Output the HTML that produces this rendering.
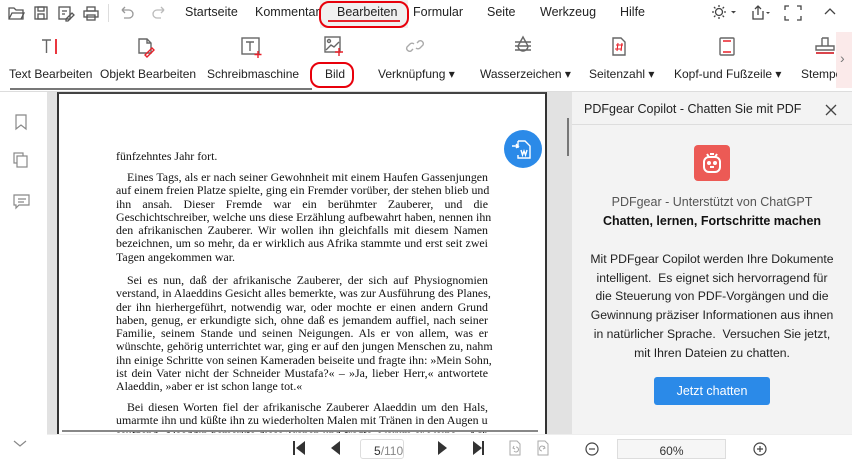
<!DOCTYPE html>
<html><head><meta charset="utf-8"><style>
*{margin:0;padding:0;box-sizing:border-box}
body{width:852px;height:456px;overflow:hidden;background:#fff;font-family:"Liberation Sans",sans-serif;font-size:12px;color:#222;position:relative}
.a{position:absolute}
.m{position:absolute;top:5px;font-size:12.5px;color:#222}
.tl{position:absolute;top:67px;font-size:12px;color:#222;white-space:nowrap}
.pg{font-family:"Liberation Serif",serif;font-size:11.9px;color:#111;position:absolute;left:116px;width:372px;line-height:13.3px}
.pg div{text-align:justify;text-align-last:justify;white-space:nowrap}
.pg div.l{text-align-last:left}
.pg div.i{text-indent:11px}
.cp{position:absolute;left:572px;width:280px;text-align:center;font-size:12px}
</style></head><body>
<svg class="a" style="left:6px;top:4px" width="160" height="18" viewBox="0 0 160 18" fill="none" stroke="#555" stroke-width="1.3">
<path d="M3 4h5l2 2h7v9H3z"/><path d="M3 15l3-6h12l-3 6"/>
<rect x="29" y="3" width="12" height="12"/><rect x="32" y="3" width="6" height="4"/><rect x="32" y="10" width="6" height="5"/>
<rect x="53" y="3" width="11" height="12"/><path d="M56 7h5M56 10h3M60 15l6-6 2 2-6 6h-2z"/>
<rect x="78" y="7" width="14" height="6"/><rect x="81" y="3" width="8" height="4"/><rect x="81" y="11" width="8" height="5"/>
<path d="M116 6h7a4 4 0 010 8h-5M116 6l3-3M116 6l3 3" stroke="#999"/>
<path d="M158 6h-7a4 4 0 000 8h4M158 6l-3-3M158 6l-3 3" stroke="#bbb"/>
</svg>
<div class="a" style="left:108px;top:4px;width:1px;height:18px;background:#ddd"></div>
<div class="m" style="left:185px">Startseite</div>
<div class="m" style="left:255px">Kommentar</div>
<div class="a" style="left:320px;top:0;width:88px;height:28px;background:#f0f0f0"></div>
<div class="m" style="left:337px">Bearbeiten</div>
<div class="a" style="left:328px;top:20px;width:72px;height:2px;background:#e8212a"></div>
<div class="a" style="left:319px;top:1px;width:90px;height:27px;border:2.5px solid #e8000b;border-radius:10px"></div>
<div class="m" style="left:413px">Formular</div>
<div class="m" style="left:487px">Seite</div>
<div class="m" style="left:540px">Werkzeug</div>
<div class="m" style="left:620px">Hilfe</div>
<svg class="a" style="left:710px;top:3px" width="130" height="20" viewBox="0 0 130 20" fill="none" stroke="#444" stroke-width="1.3">
<circle cx="9" cy="9" r="3.5"/><path d="M9 2v2M9 14v2M2 9h2M14 9h2M4 4l1.4 1.4M12.6 12.6L14 14M4 14l1.4-1.4M12.6 5.4L14 4"/>
<path d="M21 8h5l-2.5 2.5z" fill="#444" stroke="none"/>
<path d="M43 8v8h10V8M48 3v9M45 6l3-3 3 3"/><path d="M56 9h4l-2 2z" fill="#444" stroke="none"/>
<path d="M79 3h-4v4M87 3h4v4M79 17h-4v-4M87 17h4v-4"/>
<path d="M115 11l5-5 5 5"/>
</svg>
<svg class="a" style="left:0;top:34px" width="852" height="30" viewBox="0 0 852 30" fill="none" stroke="#666" stroke-width="1.4">
<path d="M42 6h9M46.5 6v13" /><path d="M56 5v15" stroke="#e8212a" stroke-width="1.8"/>
<path d="M139 5h8l4 4v10h-12z"/><path d="M147 5v4h4"/><path d="M145 21l7-7 2 2-7 7z" stroke="#e8212a"/>
<rect x="242" y="4" width="17" height="16"/><path d="M246 8h8M250 8v9"/><path d="M258 17v7M254.5 20.5h7" stroke="#e8212a"/>
<rect x="325" y="3" width="15" height="15"/><circle cx="329" cy="7" r="1.5"/><path d="M326 16l5-5 3 2 5-5"/><path d="M339 14v8M335 18h8" stroke="#e8212a"/>
<path d="M413 15l-2 2a3 3 0 01-4-4l3-3a3 3 0 014 0M417 9l2-2a3 3 0 014 4l-3 3a3 3 0 01-4 0" stroke="#aaa"/>
<path d="M515 8h16M515 12h16M515 16h16M523 3l-5 9a5 5 0 0010 0z"/>
<path d="M613 4h8l4 4v13h-12z"/><path d="M618 9l-1 8M622 9l-1 8M616 11h7M615 15h7" stroke="#e8212a" stroke-width="1.1"/>
<rect x="720" y="4" width="14" height="17" rx="1"/><path d="M723 7h8M723 18h8" stroke="#e8212a"/>
<path d="M822 4h6v8M822 4v8M816 12h18v4h-18zM816 19h18" /><path d="M816 19h18" stroke="#e8212a"/>
</svg>
<div class="a" style="left:836px;top:32px;width:16px;height:56px;background:#fbeaea"></div>
<div class="a" style="left:840px;top:50px;font-size:14px;color:#777">›</div>
<div class="tl" style="left:9px">Text Bearbeiten</div>
<div class="tl" style="left:100px">Objekt Bearbeiten</div>
<div class="tl" style="left:207px">Schreibmaschine</div>
<div class="tl" style="left:325px">Bild</div>
<div class="a" style="left:310px;top:62px;width:44px;height:26px;border:2.5px solid #e8000b;border-radius:10px"></div>
<div class="tl" style="left:378px">Verknüpfung ▾</div>
<div class="tl" style="left:480px">Wasserzeichen ▾</div>
<div class="tl" style="left:589px">Seitenzahl ▾</div>
<div class="tl" style="left:674px">Kopf-und Fußzeile ▾</div>
<div class="tl" style="left:801px;width:36px;overflow:hidden">Stempel</div>
<div class="a" style="left:10px;top:88px;width:302px;height:2px;background:#777"></div>
<div class="a" style="left:0;top:91px;width:852px;height:1px;background:#ddd"></div>
<svg class="a" style="left:10px;top:110px" width="24" height="110" viewBox="0 0 24 110" fill="none" stroke="#888" stroke-width="1.2">
<path d="M6 5h10v14l-5-4-5 4z"/>
<rect x="4" y="43" width="9" height="10"/><rect x="7" y="46" width="10" height="11" fill="#fff"/>
<path d="M4 85h15v10H9l-3 3v-3H4z"/><path d="M8 89h8M8 92h6"/>
</svg>
<svg class="a" style="left:12px;top:438px" width="16" height="12"><path d="M2 3l6 5 6-5" fill="none" stroke="#888" stroke-width="1.2"/></svg>
<div class="a" style="left:47px;top:92px;width:10px;height:342px;background:#e2e2e2"></div>
<div class="a" style="left:57px;top:92px;width:490px;height:342px;background:#fff;border-left:2px solid #333;border-right:2px solid #333;border-top:2px solid #444"></div>
<div class="a" style="left:547px;top:92px;width:25px;height:342px;background:#e2e2e2"></div>
<div class="a" style="left:567px;top:118px;width:2px;height:38px;background:#777"></div>
<div class="pg" style="top:150px"><div class="l">fünfzehntes Jahr fort.</div></div>
<div class="pg" style="top:171px">
<div class="i">Eines Tags, als er nach seiner Gewohnheit mit einem Haufen Gassenjungen</div>
<div>auf einem freien Platze spielte, ging ein Fremder vorüber, der stehen blieb und</div>
<div>ihn ansah. Dieser Fremde war ein berühmter Zauberer, und die</div>
<div>Geschichtschreiber, welche uns diese Erzählung aufbewahrt haben, nennen ihn</div>
<div>den afrikanischen Zauberer. Wir wollen ihn gleichfalls mit diesem Namen</div>
<div>bezeichnen, um so mehr, da er wirklich aus Afrika stammte und erst seit zwei</div>
<div class="l">Tagen angekommen war.</div>
</div>
<div class="pg" style="top:274px">
<div class="i">Sei es nun, daß der afrikanische Zauberer, der sich auf Physiognomien</div>
<div>verstand, in Alaeddins Gesicht alles bemerkte, was zur Ausführung des Planes,</div>
<div>der ihn hierhergeführt, notwendig war, oder mochte er einen andern Grund</div>
<div>haben, genug, er erkundigte sich, ohne daß es jemandem auffiel, nach seiner</div>
<div>Familie, seinem Stande und seinen Neigungen. Als er von allem, was er</div>
<div>wünschte, gehörig unterrichtet war, ging er auf den jungen Menschen zu, nahm</div>
<div>ihn einige Schritte von seinen Kameraden beiseite und fragte ihn: »Mein Sohn,</div>
<div>ist dein Vater nicht der Schneider Mustafa?« – »Ja, lieber Herr,« antwortete</div>
<div class="l">Alaeddin, »aber er ist schon lange tot.«</div>
</div>
<div class="pg" style="top:401px;height:32px;overflow:hidden">
<div class="i">Bei diesen Worten fiel der afrikanische Zauberer Alaeddin um den Hals,</div>
<div>umarmte ihn und küßte ihn zu wiederholten Malen mit Tränen in den Augen und</div>
<div>seufzend. Alaeddin bemerkte diese Tränen und fragte, warum er weine. »Ach</div>
</div>
<div class="a" style="left:62px;top:430px;width:476px;height:2px;background:#888"></div>
<div class="a" style="left:504px;top:130px;width:38px;height:38px;border-radius:50%;background:#2b8ae8"></div>
<svg class="a" style="left:510px;top:136px" width="26" height="26" viewBox="0 0 26 26" fill="none" stroke="#fff" stroke-width="1.4">
<path d="M8 5h7l5 5v12H8v-3M8 12V5"/><path d="M2 10h6l-2-2M8 10l-2 2"/><path d="M11 14l1.5 5 1.5-4 1.5 4 1.5-5"/>
</svg>
<div class="a" style="left:572px;top:92px;width:280px;height:342px;background:#f3f3f3"></div>
<div class="a" style="left:572px;top:124px;width:280px;height:1px;background:#ddd"></div>
<div class="a" style="left:584px;top:102px;font-size:12.5px;color:#222">PDFgear Copilot - Chatten Sie mit PDF</div>
<svg class="a" style="left:824px;top:103px" width="14" height="14"><path d="M2 2l10 10M12 2L2 12" stroke="#444" stroke-width="1.3"/></svg>
<div class="a" style="left:694px;top:145px;width:36px;height:36px;border-radius:4px;background:#ec5a55"></div>
<svg class="a" style="left:694px;top:145px" width="36" height="36" viewBox="0 0 36 36" fill="none" stroke="#fff" stroke-width="2">
<rect x="10" y="12" width="16" height="15" rx="5"/><path d="M13 9l2 3M23 9l-2 3M16 9h4"/><circle cx="15" cy="18" r="1" fill="#fff"/><circle cx="21" cy="18" r="1" fill="#fff"/><path d="M16 22h4"/>
</svg>
<div class="cp" style="top:195px;color:#555;font-size:12.5px">PDFgear - Unterstützt von ChatGPT</div>
<div class="cp" style="top:214px;font-weight:bold;color:#111;font-size:12.5px">Chatten, lernen, Fortschritte machen</div>
<div class="cp" style="top:250px;line-height:18.7px;color:#222;font-size:12.2px">Mit PDFgear Copilot werden Ihre Dokumente<br>intelligent.&nbsp; Es eignet sich hervorragend für<br>die Steuerung von PDF-Vorgängen und die<br>Gewinnung präziser Informationen aus ihnen<br>in natürlicher Sprache.&nbsp; Versuchen Sie jetzt,<br>mit Ihren Dateien zu chatten.</div>
<div class="a" style="left:654px;top:377px;width:116px;height:28px;border-radius:3px;background:#2b8ae8;color:#fff;text-align:center;line-height:28px;font-size:12.5px">Jetzt chatten</div>
<div class="a" style="left:47px;top:434px;width:805px;height:22px;background:#fff;border-top:1px solid #eee"></div>
<svg class="a" style="left:290px;top:438px" width="480" height="18" viewBox="0 0 480 18" fill="#333">
<rect x="3" y="3" width="2" height="14"/><path d="M15 3v14l-9-7z"/>
<path d="M50 3v14l-9-7z"/>
<path d="M148 3v14l9-7z"/>
<path d="M183 3v14l9-7z"/><rect x="192" y="3" width="2" height="14"/>
<g fill="none" stroke="#aaa" stroke-width="1"><path d="M220 3h7l3 3v11h-10z"/><path d="M248 3h7l3 3v11h-10z"/><path d="M226 9a2.5 2.5 0 11-2 4M224 8l-1 2 2 1"/><path d="M252 13a2.5 2.5 0 112-4M254 8l1 2-2 1"/></g>
<g fill="none" stroke="#444" stroke-width="1.2"><circle cx="302" cy="11" r="6"/><path d="M299 11h6"/><circle cx="470" cy="11" r="6"/><path d="M467 11h6M470 8v6"/></g>
</svg>
<div class="a" style="left:360px;top:439px;width:44px;height:20px;border:1px solid #ddd;border-radius:3px;font-size:12px;padding:4px 0 0 13px;color:#333">5<span style="color:#888">/110</span></div>
<div class="a" style="left:617px;top:439px;width:109px;height:20px;border:1px solid #ddd;background:#f6f6f6;text-align:center;font-size:12px;padding-top:4px;color:#333">60%</div>
</body></html>
